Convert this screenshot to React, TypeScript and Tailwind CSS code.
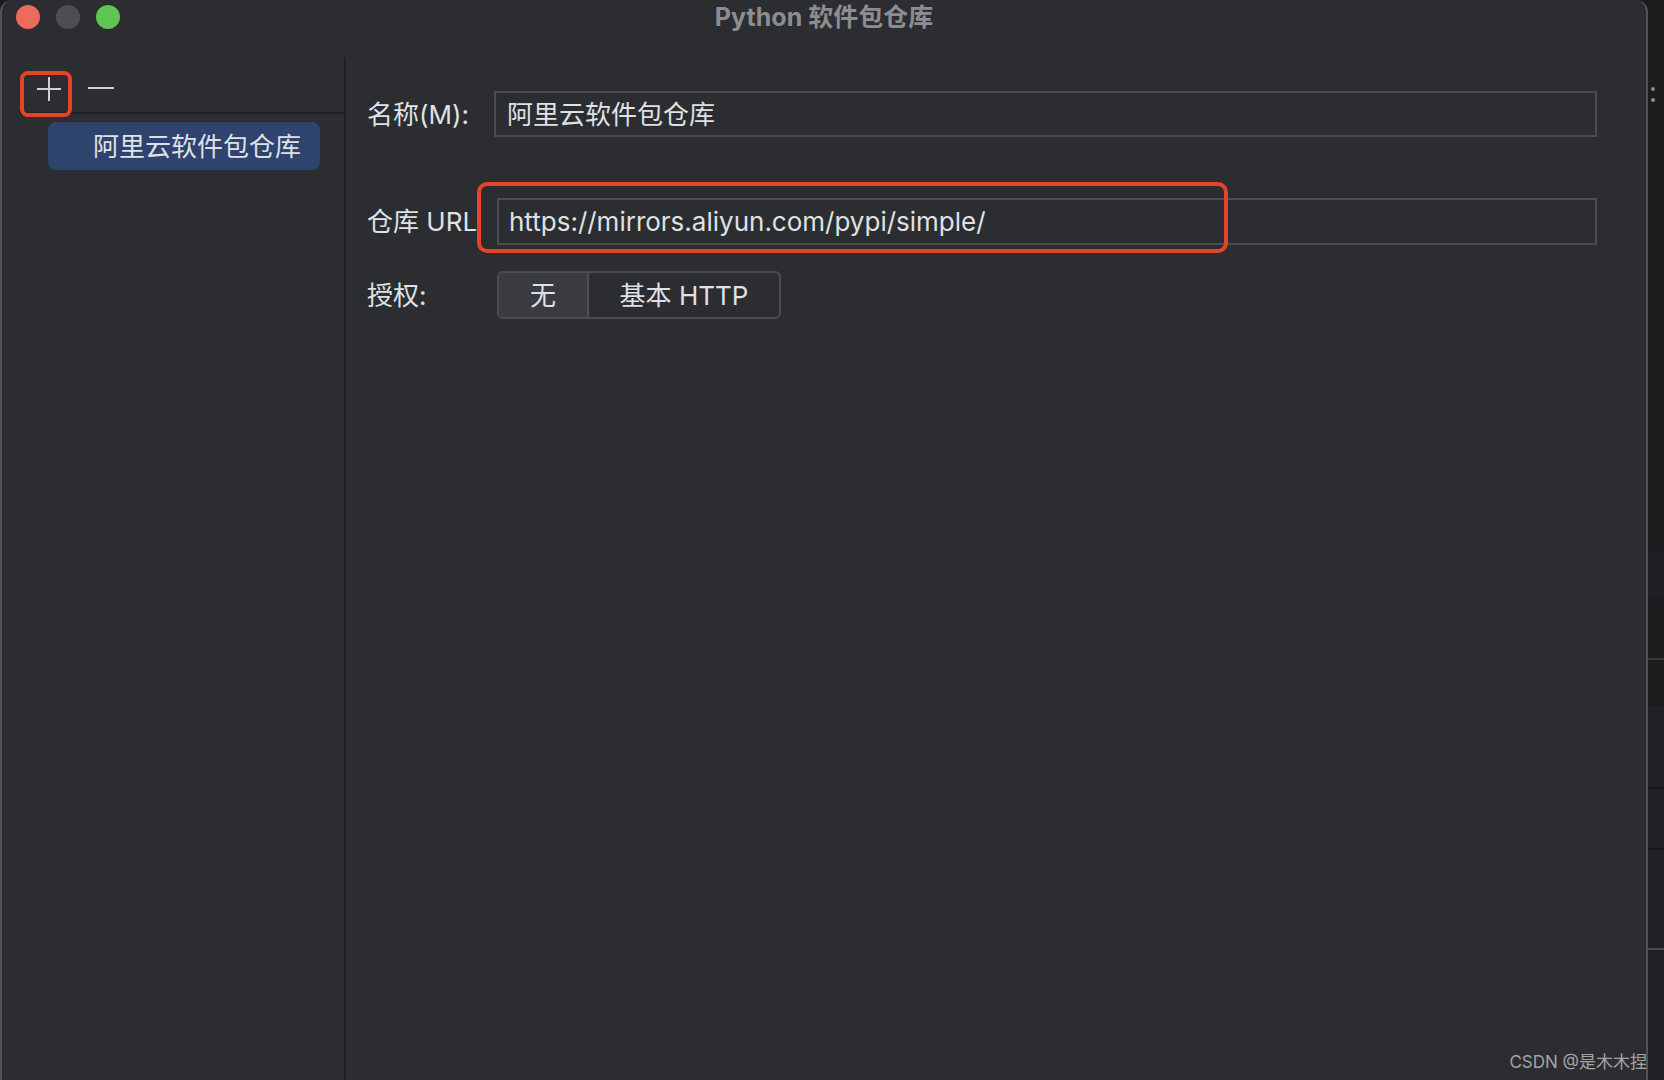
import React from 'react';

const FONT = { fontFamily: 'Inter, "Noto Sans CJK SC", sans-serif' };

const TrafficLights: React.FC = () => (
  <div className="flex items-center gap-[16px] pl-[14px]">
    <span className="w-[24px] h-[24px] rounded-full bg-[#ec6a5e]" />
    <span className="w-[24px] h-[24px] rounded-full bg-[#4d4e51]" />
    <span className="w-[24px] h-[24px] rounded-full bg-[#61c554]" />
  </div>
);

const Sidebar: React.FC = () => (
  <div className="w-[342px] flex flex-col pt-[32px]">
    {/* toolbar */}
    <div className="h-[46px] flex items-center pl-[34px] gap-[26px]">
      <span className="relative w-[26px] h-[26px]">
        <svg width="26" height="26" viewBox="0 0 26 26" className="block">
          <path d="M13 1v24M1 13h24" stroke="#ced0d6" strokeWidth="2" />
        </svg>
        <span className="absolute left-[-16px] top-[-5px] w-[52px] h-[46px] rounded-[8px] border-[4px] border-[#e5432a]" />
      </span>
      <svg width="26" height="26" viewBox="0 0 26 26" className="block">
        <path d="M0 12h26" stroke="#ced0d6" strokeWidth="2" />
      </svg>
    </div>
    <div className="h-[2px] ml-[18px] bg-[#1e1f22]" />
    <div className="mt-[8px] ml-[46px] w-[272px] h-[48px] rounded-[8px] bg-[#2e436e] flex items-center pl-[45px] text-[26px] text-[#dfe1e5]">
      阿里云软件包仓库
    </div>
  </div>
);

const Field: React.FC<{ children: React.ReactNode; className?: string }> = ({ children, className }) => (
  <div className={`relative flex-1 flex items-center border-2 border-[#4b4d52] text-[26px] text-[#dfe1e5] ${className ?? ''}`}>
    {children}
  </div>
);

const Form: React.FC = () => (
  <div className="flex-1 flex flex-col pl-[21px] pr-[49px] pt-[57px]">
    <div className="flex items-center h-[46px]">
      <span className="w-[127px] text-[26px] text-[#dfe1e5]">名称(M):</span>
      <Field className="h-[46px] pl-[11px]">阿里云软件包仓库</Field>
    </div>

    <div className="flex items-center h-[47px] mt-[61px]">
      <span className="w-[130px] text-[26px] text-[#dfe1e5]">仓库 URL</span>
      <Field className="h-[47px] pl-[10px]">
        https://mirrors.aliyun.com/pypi/simple/
        <span className="absolute left-[-22px] top-[-18px] w-[751px] h-[71px] rounded-[10px] border-[4px] border-[#e5432a]" />
      </Field>
    </div>

    <div className="flex items-center h-[48px] mt-[26px]">
      <span className="w-[130px] text-[26px] text-[#dfe1e5]">授权:</span>
      <div className="flex w-[284px] h-[48px] border-2 border-[#4b4d52] rounded-[6px] text-[26px] text-[#dfe1e5]">
        <div className="w-[90px] flex items-center justify-center bg-[#393b40] rounded-l-[4px] border-r-2 border-[#4b4d52]">无</div>
        <div className="flex-1 flex items-center justify-center">基本 HTTP</div>
      </div>
    </div>

    <div className="mt-auto mb-[8px] -mr-[50px] self-end text-[17px] leading-[20px] text-[#a3a4a6]">
      CSDN @是木木捏
    </div>
  </div>
);

const BackStrip: React.FC = () => (
  <div className="w-[16px] h-full flex flex-col bg-[#1b1c1e]">
    <div className="h-[87px]" />
    <span className="ml-[3px] w-[4px] h-[4px] rounded-full bg-[#8a8b8e]" />
    <span className="ml-[3px] mt-[7px] w-[4px] h-[4px] rounded-full bg-[#8a8b8e]" />
    <div className="h-[451px]" />
    <div className="h-[45px] bg-[#1f2023]" />
    <div className="h-[60px]" />
    <div className="h-[2px] bg-[#3a3b3e]" />
    <div className="h-[47px]" />
    <div className="h-[80px] bg-[#202124]" />
    <div className="h-[2px] bg-[#141517]" />
    <div className="h-[59px] bg-[#202124]" />
    <div className="h-[2px] bg-[#141517]" />
    <div className="h-[98px] bg-[#202124]" />
    <div className="h-[2px] bg-[#4a4b4f]" />
    <div className="flex-1 bg-[#202124]" />
  </div>
);

export default function App() {
  return (
    <div className="w-[1664px] h-[1080px] flex bg-[#1b1c1e] overflow-hidden" style={FONT}>
      <div className="w-[1648px] h-full flex flex-col bg-[#2b2d30] border-x-2 border-[#505257] rounded-t-[12px]">
        <div className="h-[34px] shrink-0 grid grid-cols-[1fr_auto_1fr] items-center">
          <TrafficLights />
          <span className="text-[25px] font-bold text-[#8b8d91] leading-none">Python 软件包仓库</span>
          <span />
        </div>
        <div className="flex-1 flex">
          <Sidebar />
          <div className="w-[2px] mt-[23px] bg-[#1e1f22]" />
          <Form />
        </div>
      </div>
      <BackStrip />
    </div>
  );
}
